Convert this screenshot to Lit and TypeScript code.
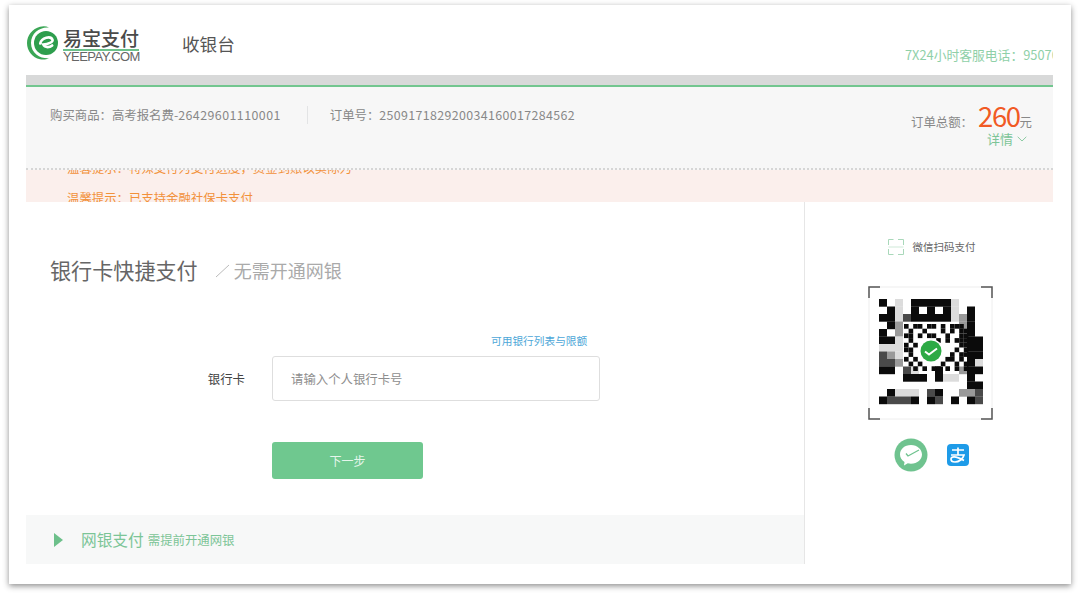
import { LitElement, html, css, svg } from "lit";
import { customElement } from "lit/decorators.js";

const OUTER = [
  "#.l.#####l...",
  ".#l.#.#.#l.#.",
  "##ld#####lm#.",
  ".#m.......m#.",
  "#.m........#.",
  "##l........##",
  "lll........##",
  "dml........##",
  "ddm........#l",
  "##.dl..#..m##",
  "...###.#ll.#.",
  "...........##",
  ".#lll.d#..mmd",
  "#ddd#.#d.#.#d",
];
const FINE = [
  "#.##.##.#.###.",
  ".#..#...#.#.##",
  "##.#.##..#..##",
  ".#.....#.#.###",
  "#.#.........##",
  "##.........#.#",
  ".#........#.##",
  "#.#......##.#.",
  ".#.#....#..#.#",
  "..#.#.##.#.#.#",
];
const TONE: Record<string, string> = { "#": "#0b0b0b", d: "#4a4a4a", m: "#9a9a9a", l: "#dcdcdc" };

@customElement("app-root")
export class AppRoot extends LitElement {
  static styles = css`
    :host {
      display: block;
      height: 596px;
      box-sizing: border-box;
      padding: 5px 9px 12px;
      background: #fff;
      font-family: "Noto Sans CJK SC", "Liberation Sans", sans-serif;
      overflow: hidden;
    }
    .card {
      height: 579px;
      box-sizing: border-box;
      padding-left: 17px;
      padding-right: 18px;
      background: #fff;
      box-shadow: 0 2px 6px rgba(0, 0, 0, 0.45);
      display: flex;
      flex-direction: column;
    }
    .head {
      height: 70px;
      flex: none;
      display: flex;
      overflow: hidden;
    }
    .logo {
      display: flex;
      align-items: flex-start;
      gap: 1px;
      padding-top: 20px;
      width: 156px;
      flex: none;
    }
    .logo-text {
      display: flex;
      flex-direction: column;
      width: 76px;
      padding-top: 1px;
    }
    .logo-cn {
      font-size: 19px;
      font-weight: 500;
      line-height: 23px;
      color: #4a4a4a;
      white-space: nowrap;
      height: 23px;
    }
    .logo-en {
      border-top: 2px solid #6cc18a;
      font-family: "Liberation Sans", sans-serif;
      font-size: 13px;
      line-height: 12px;
      color: #666;
      letter-spacing: -0.55px;
      white-space: nowrap;
    }
    .cashier {
      font-size: 17.6px;
      line-height: 26px;
      color: #555;
      padding-top: 26px;
    }
    .phone {
      margin-left: auto;
      font-size: 12.8px;
      line-height: 16px;
      color: #8fd0a8;
      padding-top: 42px;
      white-space: nowrap;
      width: 148px;
      overflow: hidden;
    }
    .bar {
      height: 10px;
      background: #d8d9d9;
      flex: none;
    }
    .green {
      height: 2px;
      background: #72c68f;
      flex: none;
    }
    .info {
      height: 83px;
      flex: none;
      box-sizing: border-box;
      background: #f7f7f7;
      border-bottom: 2px dotted #d6d6d6;
      display: flex;
      padding: 19px 21px 0 24px;
      font-size: 12.4px;
      color: #888;
    }
    .meta {
      line-height: 18px;
      white-space: nowrap;
      height: 20px;
    }
    .num {
      letter-spacing: 0.45px;
    }
    .num-long {
      letter-spacing: 0.37px;
    }
    .sep {
      width: 1px;
      height: 18px;
      background: #e3e4e5;
      margin: 0 22px 0 26px;
    }
    .total {
      margin-left: auto;
      margin-top: -4px;
      text-align: right;
    }
    .sum {
      display: flex;
      align-items: baseline;
      justify-content: flex-end;
      line-height: 26px;
      height: 28px;
      white-space: nowrap;
    }
    .amount {
      font-size: 27.5px;
      color: #f15a24;
      margin-left: 5px;
      letter-spacing: -1.4px;
    }
    .unit {
      font-size: 12.4px;
    }
    .detail {
      font-size: 13px;
      line-height: 18px;
      color: #7cc597;
      padding-right: 5px;
      display: flex;
      align-items: center;
      justify-content: flex-end;
      gap: 4px;
    }
    .notice {
      height: 32px;
      flex: none;
      background: #fbefec;
      overflow: hidden;
      padding-left: 41px;
      font-size: 12.4px;
      line-height: 30px;
      color: #f2913a;
    }
    .notice-track {
      margin-top: -17px;
    }
    .body {
      flex: 1;
      display: flex;
      min-height: 0;
    }
    .left {
      flex: 1;
      min-width: 0;
      display: flex;
      flex-direction: column;
    }
    .form {
      flex: 1;
      padding: 52px 0 0 24px;
    }
    .title {
      display: flex;
      align-items: center;
      height: 32px;
      white-space: nowrap;
    }
    .title-main {
      font-size: 21.1px;
      color: #666;
    }
    .title-sub {
      font-size: 18px;
      color: #aaa;
      margin-left: 17px;
      display: flex;
      align-items: center;
      gap: 3px;
    }
    .limit {
      margin-top: 47px;
      margin-left: 441px;
      font-size: 10.7px;
      line-height: 16px;
      color: #4da7d8;
      white-space: nowrap;
    }
    .row {
      display: flex;
      align-items: center;
      margin-top: 7px;
    }
    .label {
      width: 222px;
      padding-right: 27px;
      box-sizing: border-box;
      text-align: right;
      font-size: 12.4px;
      color: #444;
      flex: none;
    }
    .input {
      width: 328px;
      height: 45px;
      box-sizing: border-box;
      border: 1px solid #dedede;
      border-radius: 3px;
      padding-left: 18px;
      font-size: 12.4px;
      line-height: 44px;
      color: #8e8e8e;
    }
    .next {
      margin: 41px 0 0 222px;
      width: 151px;
      height: 37px;
      border-radius: 3px;
      background: #6fc88f;
      color: #e6f6ec;
      font-size: 12px;
      line-height: 37px;
      text-align: center;
    }
    .netbank {
      height: 49px;
      flex: none;
      margin-bottom: 20px;
      background: #f7f8f8;
      display: flex;
      align-items: center;
      padding-left: 28px;
      color: #7cc597;
      white-space: nowrap;
    }
    .tri {
      width: 0;
      height: 0;
      border-left: 9px solid #6dc08b;
      border-top: 7px solid transparent;
      border-bottom: 7px solid transparent;
      margin-right: 18px;
    }
    .nb-main {
      font-size: 15.7px;
      margin-right: 4px;
    }
    .nb-sub {
      font-size: 12.4px;
    }
    .side {
      width: 249px;
      flex: none;
      box-sizing: border-box;
      border-left: 1px solid #e6e6e6;
      margin-bottom: 20px;
      display: flex;
      flex-direction: column;
      align-items: center;
    }
    .scan {
      display: flex;
      align-items: center;
      gap: 9px;
      margin-top: 37px;
      margin-left: 5px;
      font-size: 10.5px;
      line-height: 16px;
      color: #666;
    }
    .qr {
      margin-top: 31px;
      margin-left: 2px;
      width: 125px;
      height: 134px;
      display: block;
    }
    .pay {
      display: flex;
      align-items: center;
      gap: 19px;
      margin-top: 18px;
      margin-left: 5px;
    }
  `;

  private qr() {
    const dx = 11,
      dy = 13;
    const w = 8,
      h = 7.5;
    const out: unknown[] = [];
    OUTER.forEach((r, y) =>
      [...r].forEach((c, x) => {
        if (TONE[c]) out.push(svg`<rect x=${dx + x * w} y=${dy + y * h} width=${w} height=${h + 0.2} fill=${TONE[c]}></rect>`);
      })
    );
    FINE.forEach((r, y) =>
      [...r].forEach((c, x) => {
        if (c === "#") out.push(svg`<rect x=${dx + 25 + x * 4.6} y=${dy + 25 + y * 4.7} width="4.6" height="4.7" fill="#0b0b0b"></rect>`);
      })
    );
    return out;
  }

  render() {
    return html`
      <div class="card">
        <div class="head">
          <div class="logo">
            <svg width="36" height="36" viewBox="0 0 36 36" style="flex:none">
              <path d="M23 2.500C20 1 17 1 14 1.800 6.500 3.800 1 10.500 1 18c0 8 5.500 14.700 13 16.300 3 .6 6.500.3 9-1-8 .7-18-4.500-18-15.300C5 8 14 1.500 23 2.500z" fill="#3aa655"/>
              <circle cx="20" cy="18" r="12" fill="#2e9e4d"/>
              <path d="M14.200 18.500c1.500-6 10.500-8 12.300-3.800.9 2.400-4.500 4.300-9.300 4.800 2 3.700 6.500 3 9 1" fill="none" stroke="#fff" stroke-width="2.600" stroke-linecap="round"/>
            </svg>
            <div class="logo-text">
              <div class="logo-cn">易宝支付</div>
              <div class="logo-en">YEEPAY.COM</div>
            </div>
          </div>
          <div class="cashier">收银台</div>
          <div class="phone">7X24小时客服电话：95070</div>
        </div>
        <div class="bar"></div>
        <div class="green"></div>
        <div class="info">
          <div class="meta">购买商品：高考报名费-<span class="num">26429601110001</span></div>
          <div class="sep"></div>
          <div class="meta">订单号：<span class="num-long">250917182920034160017284562</span></div>
          <div class="total">
            <div class="sum">订单总额：<span class="amount">260</span><span class="unit">元</span></div>
            <div class="detail">
              详情
              <svg width="10" height="6" viewBox="0 0 10 6"><path d="M.7.8 5 5 9.300.8" fill="none" stroke="#8ccba3" stroke-width="1"/></svg>
            </div>
          </div>
        </div>
        <div class="notice">
          <div class="notice-track">
            <div>温馨提示：特殊支付为支付进度，资金到账以实际为</div>
            <div>温馨提示：已支持金融社保卡支付</div>
          </div>
        </div>
        <div class="body">
          <div class="left">
            <div class="form">
              <div class="title">
                <span class="title-main">银行卡快捷支付</span>
                <span class="title-sub">
                  <svg width="16" height="16" viewBox="0 0 16 16"><path d="M1 15 14 3" stroke="#bbb" stroke-width="1"/></svg>
                  无需开通网银
                </span>
              </div>
              <div class="limit">可用银行列表与限额</div>
              <div class="row">
                <div class="label">银行卡</div>
                <div class="input">请输入个人银行卡号</div>
              </div>
              <div class="next">下一步</div>
            </div>
            <div class="netbank">
              <span class="tri"></span>
              <span class="nb-main">网银支付</span>
              <span class="nb-sub">需提前开通网银</span>
            </div>
          </div>
          <div class="side">
            <div class="scan">
              <svg width="16" height="16" viewBox="0 0 16 16" fill="none" stroke="#a9d8ba" stroke-width="1">
                <path d="M.5 6V.5h5M10 .5h5.500V6M.5 10v5.500h5M10 15.500h5.500V10"/>
                <path d="M.5 8h15" stroke="#cfe9d8"/>
              </svg>
              微信扫码支付
            </div>
            <svg class="qr" viewBox="0 0 125 134">
              <rect x="1" y="1" width="123" height="132" fill="none" stroke="#eeeeee"/>
              ${this.qr()}
              <circle cx="63" cy="65" r="12" fill="#fff"/>
              <circle cx="63" cy="65" r="10.500" fill="#2daa45"/>
              <path d="M57 65.500l4 3 8-6" fill="none" stroke="#fff" stroke-width="2"/>
              <path d="M1 12V1h11M113 1h11v11M1 122v11h11M113 133h11v-11" fill="none" stroke="#555" stroke-width="1.500"/>
            </svg>
            <div class="pay">
              <svg width="34" height="34" viewBox="0 0 34 34">
                <circle cx="17" cy="17" r="16.500" fill="#6fc38f"/>
                <path d="M17 7c-6.500 0-11 4.200-11 9.500 0 3.200 1.800 5.800 4.500 7.500l-.5 3.500 3.800-2.200c1 .2 2.100.4 3.200.4 6.500 0 11-4.200 11-9.200S23.500 7 17 7z" fill="#fff"/>
                <path d="M12 15.500l2 2.500 11-6" fill="none" stroke="#6fc38f" stroke-width="1.300"/>
              </svg>
              <svg width="22" height="22" viewBox="0 0 22 22">
                <rect width="22" height="22" rx="4" fill="#1e9be8"/>
                <path d="M5 6h12M11 3.500V11M4 11h13c-1 4-5 7-9 7-3 0-4-1.500-4-3 0-2.500 4-3.500 13 1.500" fill="none" stroke="#fff" stroke-width="1.700"/>
              </svg>
            </div>
          </div>
        </div>
      </div>
    `;
  }
}
